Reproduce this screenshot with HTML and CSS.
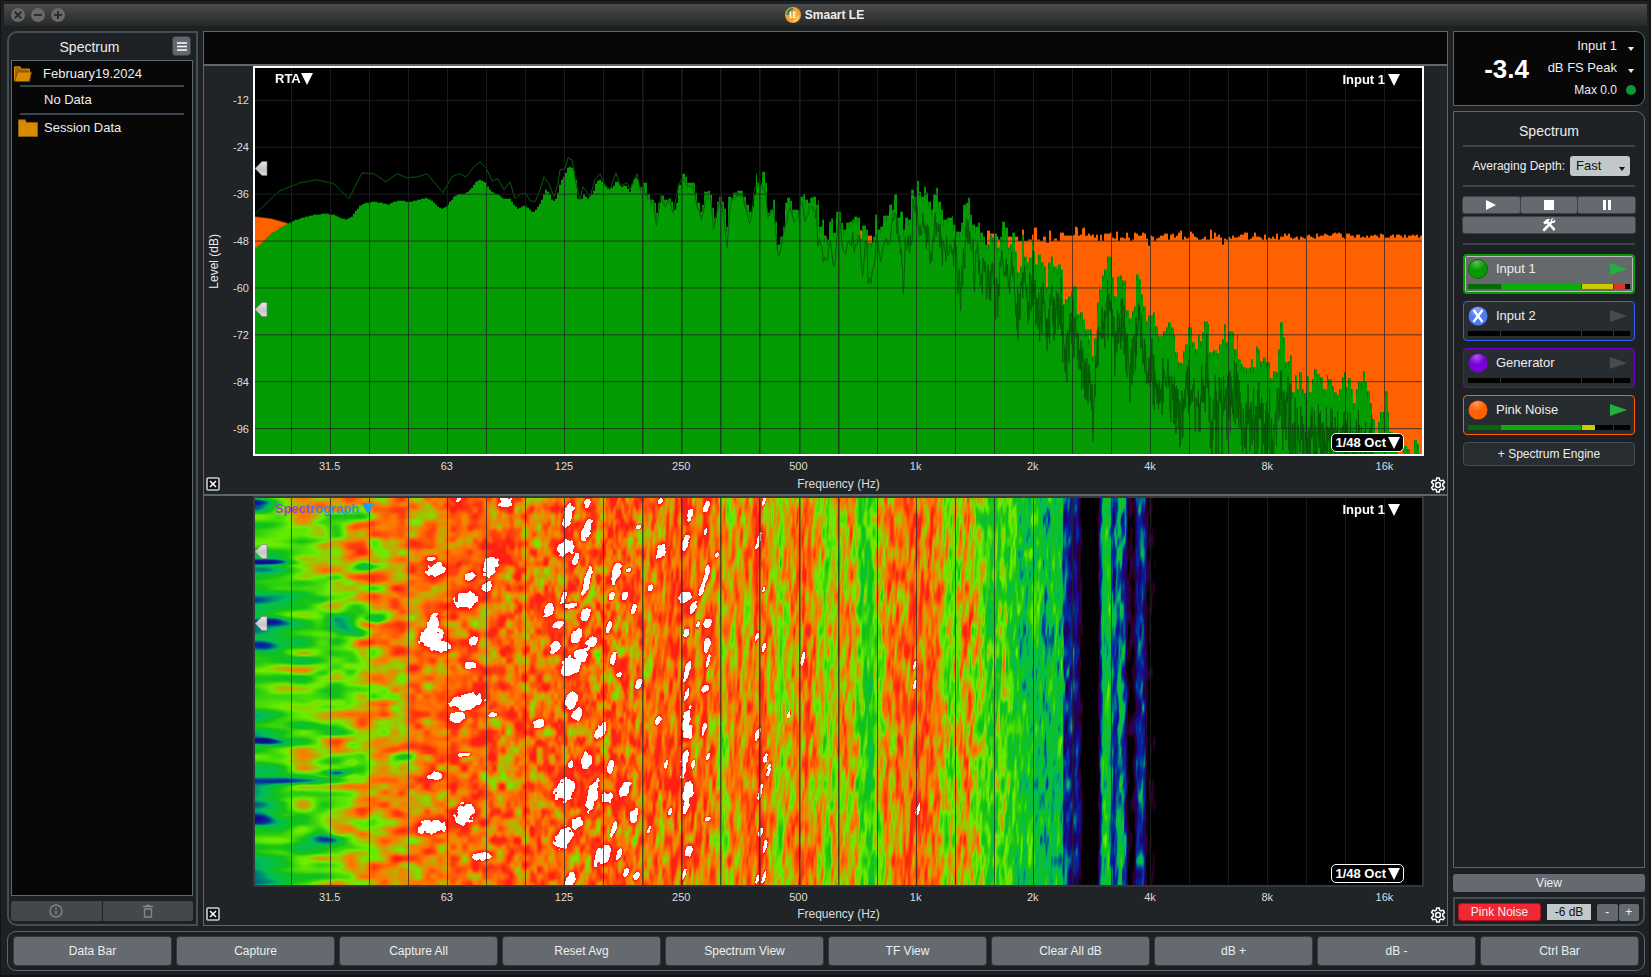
FILE: index.html
```html
<!DOCTYPE html>
<html lang="en">
<head>
<meta charset="utf-8">
<title>Smaart LE</title>
<link rel="stylesheet" href="styles.css">
</head>
<body>
<svg class="defs" width="0" height="0" aria-hidden="true">
  <defs>
    <radialGradient id="shine" cx=".42" cy=".15" r=".45"><stop offset="0" stop-color="#fff" stop-opacity=".35"/><stop offset="1" stop-color="#fff" stop-opacity="0"/></radialGradient>
    <linearGradient id="blue" x1="0" x2="1"><stop offset="0" stop-color="#2f8fe0"/><stop offset="1" stop-color="#00b0ff"/></linearGradient>
    <linearGradient id="knob" x1="0" x2="0" y1="0" y2="1"><stop offset="0" stop-color="#e8e8e8"/><stop offset=".55" stop-color="#c6c6c6"/><stop offset="1" stop-color="#e0e0e0"/></linearGradient>
    <symbol id="tri" viewBox="0 0 12 12"><path d="M0 0h12L6 12z" fill="currentColor"/></symbol>
    <symbol id="caret" viewBox="0 0 6 4"><path d="M0 0h6L3 4z" fill="currentColor"/></symbol>
    <symbol id="handle" viewBox="0 0 13 15"><path d="M0 7.500L7 .5h5v14H7z" fill="url(#knob)" stroke="#777" stroke-width=".6"/></symbol>
    <symbol id="gear" viewBox="0 0 24 24"><path d="M10 1.500h4l.6 3.300 2 1.100 3.100-1.200 2 3.500-2.500 2.100v3.400l2.500 2.100-2 3.500-3.100-1.200-2 1.100-.6 3.300h-4l-.6-3.300-2-1.100-3.100 1.200-2-3.500 2.500-2.100v-3.400L2.300 8.200l2-3.500 3.100 1.200 2-1.100z" fill="none" stroke="currentColor" stroke-width="2.200" stroke-linejoin="round"/><circle cx="12" cy="12" r="3.700" fill="none" stroke="currentColor" stroke-width="2.200"/></symbol>
    <symbol id="xbox" viewBox="0 0 14 14"><rect x="1" y="1" width="12" height="12" rx="1" fill="#111" stroke="#ccc" stroke-width="1.600"/><path d="M4 4l6 6M10 4l-6 6" stroke="#fff" stroke-width="1.600"/></symbol>
  </defs>
</svg>
<div class="window">
  <header class="titlebar">
    <div class="lights">
      <button class="light" aria-label="Close"><svg viewBox="0 0 14 14"><circle cx="7" cy="7" r="7"/><path d="M3.800 3.800l6.400 6.400M10.200 3.800l-6.400 6.400"/></svg></button>
      <button class="light" aria-label="Minimize"><svg viewBox="0 0 14 14"><circle cx="7" cy="7" r="7"/><path d="M3 7h8"/></svg></button>
      <button class="light" aria-label="Zoom"><svg viewBox="0 0 14 14"><circle cx="7" cy="7" r="7"/><path d="M3 7h8M7 3v8"/></svg></button>
    </div>
    <div class="title">
      <svg class="logo" viewBox="0 0 16 16"><circle cx="8" cy="8" r="8" fill="#eda52b"/><path d="M2.500 8A5.500 5.500 0 0 1 8 2" fill="none" stroke="#14806a" stroke-width="2"/><path d="M13.500 8.500A5.500 5.500 0 0 1 8 14" fill="none" stroke="#f8cf7e" stroke-width="1.600"/><path d="M5.500 5v5.500h2M11 5.300H8.700v5H11M8.700 7.800h2" fill="none" stroke="#fff" stroke-width="1.200"/></svg>
      <h1>Smaart LE</h1>
    </div>
  </header>

  <main class="main">
    <aside class="databar">
      <div class="databar-head"><h2>Spectrum</h2><button class="menu" aria-label="Data menu"><svg viewBox="0 0 10 9"><path d="M0 1h10M0 4.500h10M0 8h10"/></svg></button></div>
      <ul class="tree">
        <li class="open"><svg class="folder" viewBox="0 0 18 16"><path d="M.5 15V.8h5.500l1.200 2.200h8.300v3" fill="#a86500" stroke="#d98b00"/><path d="M3.500 6h14l-2 9.500H.8z" fill="#d98b00" stroke="#6e4500" stroke-width=".8"/></svg>February19.2024</li>
        <li class="leaf">No Data</li>
        <li><svg class="folder big" viewBox="0 0 20 18"><path d="M.5 17.500V.8h6.800l1 2.600h11.200v14.100z" fill="#d98b00" stroke="#96600a" stroke-width=".8"/></svg>Session Data</li>
      </ul>
      <div class="pair">
        <button aria-label="Info"><svg viewBox="0 0 14 14"><circle cx="7" cy="7" r="6"/><path d="M7 6.200v4M7 3.600v1.300"/></svg></button>
        <button aria-label="Delete"><svg viewBox="0 0 14 14"><path d="M2 2.500h10M5 1.300h4M3.500 5v8h7V5z"/></svg></button>
      </div>
    </aside>

    <section class="graphs">
      <div class="strip"></div>
      <div class="pane rta">
        <div class="yname"><span>Level (dB)</span></div>
        <div class="yticks"><span>-12</span><span>-24</span><span>-36</span><span>-48</span><span>-60</span><span>-72</span><span>-84</span><span>-96</span></div>
        <div class="plot active">
          <canvas id="rta" width="1167" height="387"></canvas>
          <button class="tag type">RTA<svg><use href="#tri"/></svg></button>
          <button class="tag source">Input 1<svg><use href="#tri"/></svg></button>
          <button class="tag band">1/48 Oct<svg><use href="#tri"/></svg></button>
          <svg class="handle h1"><use href="#handle"/></svg>
          <svg class="handle h2"><use href="#handle"/></svg>
        </div>
        <div class="xticks"><span>31.5</span><span>63</span><span>125</span><span>250</span><span>500</span><span>1k</span><span>2k</span><span>4k</span><span>8k</span><span>16k</span></div>
        <button class="corner x" aria-label="Hide plot"><svg><use href="#xbox"/></svg></button>
        <div class="xname">Frequency (Hz)</div>
        <button class="corner g" aria-label="Plot settings"><svg><use href="#gear"/></svg></button>
      </div>
      <div class="pane sgram">
        <div class="plot">
          <canvas id="sgram" width="1167" height="387"></canvas>
          <button class="tag type rainbow"><span>Spectrograph</span><svg viewBox="0 0 12 12"><path d="M0 0h12L6 12z" fill="url(#blue)"/></svg></button>
          <button class="tag source">Input 1<svg><use href="#tri"/></svg></button>
          <button class="tag band">1/48 Oct<svg><use href="#tri"/></svg></button>
          <svg class="handle h3"><use href="#handle"/></svg>
          <svg class="handle h4"><use href="#handle"/></svg>
        </div>
        <div class="xticks"><span>31.5</span><span>63</span><span>125</span><span>250</span><span>500</span><span>1k</span><span>2k</span><span>4k</span><span>8k</span><span>16k</span></div>
        <button class="corner x" aria-label="Hide plot"><svg><use href="#xbox"/></svg></button>
        <div class="xname">Frequency (Hz)</div>
        <button class="corner g" aria-label="Plot settings"><svg><use href="#gear"/></svg></button>
      </div>
    </section>

    <aside class="controls">
      <div class="meter">
        <strong>-3.4</strong>
        <div class="meter-rows">
          <label><select aria-label="Meter input"><option>Input 1</option></select><svg class="caret"><use href="#caret"/></svg></label>
          <label><select aria-label="Meter type"><option>dB FS Peak</option></select><svg class="caret"><use href="#caret"/></svg></label>
          <div class="max"><span>Max 0.0</span><i></i></div>
        </div>
      </div>
      <div class="spectrum">
        <h2>Spectrum</h2>
        <div class="depth"><label for="depth">Averaging Depth:</label><div class="selectbox"><select id="depth"><option>Fast</option></select><svg class="caret"><use href="#caret"/></svg></div></div>
        <div class="transport">
          <button aria-label="Run"><svg viewBox="0 0 10 10"><path d="M0 0l10 5-10 5z"/></svg></button>
          <button aria-label="Stop"><svg viewBox="0 0 10 10"><path d="M0 0h10v10H0z"/></svg></button>
          <button aria-label="Pause"><svg viewBox="0 0 10 10"><path d="M1 0h3v10H1zM6 0h3v10H6z"/></svg></button>
          <button class="tools" aria-label="Measurement config"><svg viewBox="0 0 14 14"><path d="M1 4.500L5 1h3L6.500 3.500 13.500 11l-1.600 2L5 5.500 3 6.500z"/><path d="M13 1.500l-2 1.800-.8-.2-.2-1L12 .3c-2-.6-3.600.8-3.200 2.700L1 11c-.8 1.200 1 2.800 2 2l7.500-8c2 .5 3.200-1.200 2.500-3.500z"/></svg></button>
        </div>
        <div class="engines">
          <div class="engine green selected">
            <svg class="ball" viewBox="0 0 20 20"><circle cx="10" cy="10" r="9.500" fill="#079a00" stroke="#0a6a08"/><circle cx="10" cy="10" r="9" fill="url(#shine)"/></svg><span>Input 1</span><button class="go on" aria-label="Run Input 1"><svg viewBox="0 0 17 12"><path d="M0 0l17 6-17 6z"/></svg></button>
            <div class="level"><i><b class="c1" style="width:100%"></b></i><i><b class="c2" style="width:100%"></b></i><i><b class="c3" style="width:100%"></b></i><i><b class="c4" style="width:70%"></b></i></div>
          </div>
          <div class="engine blue">
            <svg class="ball" viewBox="0 0 20 20"><circle cx="10" cy="10" r="9.500" fill="#5079f5"/><circle cx="10" cy="10" r="9" fill="url(#shine)"/><path d="M5.500 4l9 12M14.500 4l-9 12" stroke="#fff" stroke-width="2.400"/></svg><span>Input 2</span><button class="go" aria-label="Run Input 2"><svg viewBox="0 0 17 12"><path d="M0 0l17 6-17 6z"/></svg></button>
            <div class="level"><i></i><i></i><i></i><i></i></div>
          </div>
          <div class="engine purple">
            <svg class="ball" viewBox="0 0 20 20"><circle cx="10" cy="10" r="9.500" fill="#7800d8"/><circle cx="10" cy="10" r="9" fill="url(#shine)"/></svg><span>Generator</span><button class="go" aria-label="Run Generator"><svg viewBox="0 0 17 12"><path d="M0 0l17 6-17 6z"/></svg></button>
            <div class="level"><i></i><i></i><i></i><i></i></div>
          </div>
          <div class="engine orange">
            <svg class="ball" viewBox="0 0 20 20"><circle cx="10" cy="10" r="9.500" fill="#ff6000"/><circle cx="10" cy="10" r="9" fill="url(#shine)"/></svg><span>Pink Noise</span><button class="go on" aria-label="Run Pink Noise"><svg viewBox="0 0 17 12"><path d="M0 0l17 6-17 6z"/></svg></button>
            <div class="level"><i><b class="c1" style="width:100%"></b></i><i><b class="c2" style="width:100%"></b></i><i><b class="c3" style="width:42%"></b></i><i></i></div>
          </div>
          <button class="add">+ Spectrum Engine</button>
        </div>
      </div>
      <button class="view">View</button>
      <div class="generator">
        <button class="noise">Pink Noise</button>
        <input type="text" value="-6 dB" aria-label="Generator level">
        <div class="steps"><button>-</button><button>+</button></div>
      </div>
    </aside>
  </main>

  <nav class="commands">
    <button>Data Bar</button><button>Capture</button><button>Capture All</button><button>Reset Avg</button><button>Spectrum View</button><button>TF View</button><button>Clear All dB</button><button>dB +</button><button>dB -</button><button>Ctrl Bar</button>
  </nav>
</div>
<script src="plots.js"></script>
</body>
</html>
```

FILE: styles.css
```css
* { box-sizing: border-box; }
body, h1, h2, ul { margin: 0; padding: 0; }
body { background: #1d2124; color: #eee; font: 12px/16px "Liberation Sans", Arial, sans-serif; }
button, select, input { font: inherit; color: inherit; margin: 0; padding: 0; border: 0; background: none; }
select { appearance: none; }
svg { display: block; }
.defs { position: absolute; }

.window { height: 100vh; display: flex; flex-direction: column; border: 1px solid #111416; border-width: 1px 2px 2px 1px; padding: 3px 4px 3px 6px; }
.titlebar { flex: none; height: 22px; margin: 0 -2px 5px -3px; padding: 0 9px 0 7px; display: grid; grid-template-columns: 1fr auto 1fr; align-items: center; background: linear-gradient(#4c4c4c, #272828); }
.lights { display: flex; gap: 6px; }
.light svg { width: 14px; height: 14px; fill: #696969; stroke: #2c2c2c; stroke-width: 2; }
.light circle { stroke: none; }
.title { display: flex; align-items: center; gap: 4px; }
.logo { width: 16px; height: 16px; }
h1 { font-size: 12px; line-height: 16px; }
h2 { font-size: 14px; line-height: 16px; font-weight: 400; text-align: center; }

.main { flex: 1; min-height: 0; display: grid; grid-template-columns: 191px 1fr 192px; gap: 5px; }

.databar { display: flex; flex-direction: column; border: 2px solid #454e54; border-radius: 10px 0 0 10px; padding: 4px 3px 3px 2px; min-height: 0; }
.databar-head { position: relative; height: 23px; padding: 2px 25px 0 0; }
.menu { position: absolute; right: 3px; top: 0; width: 17px; height: 18px; border-radius: 3px; background: #63686e; box-shadow: 0 0 0 1px #3a4248; }
.menu svg { width: 10px; height: 9px; margin: 0 auto; stroke: #fff; stroke-width: 1.500; }
.tree { flex: 1; list-style: none; background: #070707; border: 1px solid #5b676e; padding: 0 8px; font-size: 13px; }
.tree li { display: flex; align-items: center; gap: 2px; height: 27px; }
.tree li + li { border-top: 2px solid #3a4350; }
.tree .leaf { padding-left: 24px; height: 28px; }
.tree .open { margin-left: -6px; gap: 11px; height: 24px; padding-top: 2px; }
.folder { width: 18px; height: 16px; }
.folder.big { width: 20px; height: 18px; margin-left: -2px; margin-right: 4px; }
.pair { display: grid; grid-template-columns: 1fr 1fr; gap: 1px; margin-top: 5px; }
.pair button { height: 20px; background: #43484c; border-radius: 3px 0 0 3px; }
.pair button + button { border-radius: 0 3px 3px 0; }
.pair svg { width: 14px; height: 14px; margin: 0 auto; fill: none; stroke: #82878a; stroke-width: 1.300; }

.graphs { display: flex; flex-direction: column; min-width: 0; min-height: 0; border: 1px solid #5b666d; background: #202427; }
.strip { flex: none; height: 34px; background: #070707; border-bottom: 2px solid #5b666d; }
.pane { position: relative; flex: 1 1 0; min-height: 0; padding-bottom: 2px; display: grid; grid-template: minmax(0, 1fr) 20px 16px / 28px 21px minmax(0, 1fr) 23px; }
.pane.rta { flex-basis: 3px; padding-bottom: 1px; grid-template-rows: minmax(0, 1fr) 21px 16px; border-bottom: 2px solid #5b666d; }
.xticks { grid-area: 2 / 1 / 3 / 5; display: grid; grid-template-columns: repeat(10, 1fr); margin: 2px 4px 0 67px; text-align: center; font-size: 11px; }
.xname { grid-area: 3 / 3; text-align: center; line-height: 14px; }
.yname { grid-area: 1 / 1; display: grid; place-items: center; writing-mode: vertical-rl; }
.yname span { transform: rotate(180deg); margin-right: 8px; }
.yticks { grid-area: 1 / 1 / 2 / 3; display: grid; grid-template-rows: repeat(8, 1fr); align-items: center; text-align: right; font-size: 11px; padding: 11px 4px 4px 0; }
.xticks, .yticks, .xname { color: #ddd; }
.plot { grid-area: 1 / 3; position: relative; min-width: 0; min-height: 0; border: 2px solid #35383a; background: #000; }
.plot.active { border-color: #fff; }
.plot canvas { display: block; width: 100%; height: 100%; }
.corner { grid-row: 3; align-self: start; }
.corner.x { grid-column: 1; }
.corner.g { grid-column: 4; }
.corner svg { width: 14px; height: 14px; margin-left: 2px; }
.corner.g svg { width: 16px; height: 16px; margin-left: 6px; color: #fff; }
.tag { position: absolute; display: flex; align-items: center; gap: 1px; font-size: 13px; line-height: 16px; font-weight: 700; color: #fff; }
.tag svg { width: 12px; height: 12px; }
.type { left: 20px; top: 3px; gap: 0; }
.source { right: 22px; top: 4px; gap: 3px; }
.band { right: 18px; bottom: 2px; height: 19px; gap: 2px; padding: 0 3px; background: #000; border: 1px solid #fff; border-radius: 5px; }
.rainbow { gap: 2px; }
.rainbow span { background: linear-gradient(90deg, #c030e0, #7848e0 20%, #2b8be0 55%, #2f8fe0); background-clip: text; -webkit-background-clip: text; color: transparent; }
.handle { position: absolute; left: 0; width: 13px; height: 15px; }
.h1 { top: 24%; } .h2 { top: 60.5%; } .h3 { top: 12%; } .h4 { top: 30.5%; }

.controls { display: flex; flex-direction: column; min-height: 0; }
.meter { display: flex; align-items: center; justify-content: flex-end; gap: 10px; height: 75px; padding: 0 8px 2px 0; background: #070707; border: 1px solid #5b676e; border-radius: 0 9px 9px 0; }
.meter strong { font-size: 26px; line-height: 30px; padding-top: 2px; color: #fff; }
.meter-rows { display: grid; gap: 6px; font-size: 13px; }
.meter label, .max { display: grid; grid-template-columns: 78px 10px; gap: 9px; align-items: center; height: 16px; }
.meter select { width: 78px; text-align: right; text-align-last: right; }
.meter .caret { margin: 6px 2px 0; }
.caret { width: 6px; height: 4px; }
.max { text-align: right; font-size: 12px; }
.max i { width: 10px; height: 10px; border-radius: 50%; background: #079a38; }

.spectrum { flex: 1; min-height: 0; margin-top: 5px; padding: 11px 9px; border: 1px solid #5b676e; border-radius: 0 9px 0 0; }
.spectrum h2 { height: 24px; border-bottom: 2px solid #3c444a; }
.depth { display: flex; align-items: center; justify-content: flex-end; gap: 5px; height: 40px; padding-right: 5px; border-bottom: 2px solid #3c444a; }
.selectbox { position: relative; color: #111; }
.selectbox select { width: 60px; height: 20px; padding-left: 6px; border-radius: 3px; background: #c2c8c9; font-size: 13px; }
.selectbox .caret { position: absolute; right: 5px; bottom: 5px; }
.transport { display: grid; grid-template-columns: repeat(3, 1fr); gap: 4px 1px; padding: 10px 0; border-bottom: 2px solid #3c444a; }
.transport button { height: 16px; background: #646a6f; border-radius: 2px; box-shadow: 0 0 0 1px #3a4248; }
.transport .tools { grid-column: 1 / 4; }
.transport svg { width: 10px; height: 10px; margin: 0 auto; fill: #fff; }
.transport .tools svg { width: 14px; height: 14px; }
.engines { display: grid; gap: 7px; padding-top: 9px; }
.engine { position: relative; height: 40px; padding: 4px 7px 0 4px; display: grid; grid-template: 20px 5px / 20px 1fr 17px; column-gap: 8px; row-gap: 5px; align-items: center; background: #272c30; border: 1px solid; border-radius: 4px; font-size: 13px; }
.engine.green { border: 2px solid #079a00; padding: 3px 6px 0 3px; }
.engine.selected { background: #66696c; box-shadow: inset 0 0 0 1px #bbb; }
.engine.blue { border-color: #3460f0; }
.engine.purple { border-color: #7200cc; }
.engine.orange { border-color: #ff6000; }
.engine span { color: #eee; }
.ball { width: 20px; height: 20px; }
.go svg { width: 17px; height: 12px; fill: #4a4a4a; }
.go.on svg { fill: #24b040; }
.level { grid-column: 1 / 4; margin-right: -3px; height: 5px; display: grid; grid-template-columns: 32fr 80fr 31fr 16fr; gap: 1px; background: #33383b; }
.level i { background: #000; }
.level b { display: block; height: 5px; }
.c1 { background: #056a05; } .c2 { background: #06b006; } .c3 { background: #cccb00; } .c4 { background: #d83232; }
.add { height: 24px; border: 1px solid #454e54; border-radius: 4px; background: #282d31; }
.view { flex: none; height: 18px; margin-top: 6px; background: #646a6f; border-radius: 3px; }
.generator { flex: none; height: 29px; margin-top: 5px; display: flex; align-items: center; gap: 6px; padding: 1px 4px 0 3px; border: 2px solid #454e54; border-radius: 0 0 9px 0; }
.noise { width: 83px; height: 18px; border-radius: 3px; background: #ee2835; border: 1px solid #b5101c; line-height: 14px; }
.generator input { width: 44px; height: 16px; background: #c2c8c9; color: #111; text-align: center; min-width: 0; }
.steps { display: grid; grid-template-columns: 1fr 1fr; gap: 1px; flex: 1; }
.steps button { height: 17px; background: #646a6f; border-radius: 2px; line-height: 14px; }

.commands { flex: none; margin-top: 5px; margin-bottom: 1px; height: 40px; display: grid; grid-template-columns: repeat(10, 1fr); gap: 6px; align-items: center; padding: 0 6px; border: 1px solid #5b676e; border-radius: 9px; }
.commands button { height: 28px; background: #646a6f; border-radius: 3px; box-shadow: 0 0 0 1px #33393e; }
```

FILE: plots.js
```js
// Deterministic pseudo random source so the plots are stable between loads.
function rng(seed) {
  return function () {
    seed = (seed + 0x6D2B79F5) | 0;
    var t = Math.imul(seed ^ (seed >>> 15), 1 | seed);
    t = (t + Math.imul(t ^ (t >>> 7), 61 | t)) ^ t;
    return ((t ^ (t >>> 14)) >>> 0) / 4294967296;
  };
}
// "x:y x:y" series to points, scaled and shifted into plot space.
function series(text, dx, dy, k) {
  return text.trim().split(/\s+/).map(function (p) {
    var a = p.split(':');
    return [+a[0] * k + dx, +a[1] * k + dy];
  });
}
function lerpAt(pts, x) {
  if (x <= pts[0][0]) return pts[0][1];
  for (var i = 1; i < pts.length; i++) {
    if (x <= pts[i][0]) {
      var a = pts[i - 1], b = pts[i];
      return a[1] + (b[1] - a[1]) * (x - a[0]) / (b[0] - a[0] || 1);
    }
  }
  return pts[pts.length - 1][1];
}
function grid(ctx, w, h, rows) {
  for (var k = 0; k < 29; k++) {
    ctx.fillStyle = 'rgba(34,36,40,.72)';
    ctx.fillRect(Math.round(36 + 39.04 * k), 0, 1, h);
    if (k > 8 && k < 15) {
      ctx.fillStyle = 'rgba(34,36,40,.4)';
      ctx.fillRect(Math.round(36 + 39.04 * k) + 1, 0, 1, h);
    }
  }
  if (rows) {
    ctx.fillStyle = 'rgba(34,36,40,.8)';
    for (var r = 0; r < 8; r++) ctx.fillRect(0, 32 + 47 * r, w, 1);
  }
}

(function drawRta() {
  var c = document.getElementById('rta'), ctx = c.getContext('2d'), w = c.width, h = c.height, rand = rng(7);
  var T = 1 / 3;
  var low = series('255:248 262:242 270:234 278:229 287:224 296:220 305:217 315:215 325:214 333:215 339:218 345:220 350:218 355:211 360:205 366:203 372:202 380:203 387:205 393:202 400:201 410:202 417:200 425:198 430:200 436:206 442:209 447:205 453:197 460:194 466:193 470:189 475:182 480:180 485:183 490:192 497:195 503:199 509:199 513:205 517:209 524:206 528:209 532:213 536:209 540:202 543:195 545:190 548:193 551:200 554:202 557:193 560:181 564:176 567:168 570:166 573:171 576:184 577:199 580:201 583:195 587:199 592:194 596:181 600:180 604:186 608:190 613:186 616:180 620:187 625:186 629:192 632:181 636:177 639:186', -255, -68, 1);
  var mid = series('0:140 10:130 20:165 30:180 42:190 48:220 55:190 63:168 73:180 83:178 92:185 100:210 108:190 113:135 122:135 127:102 135:110 140:128 160:130 165:160 170:190 180:215 187:195 193:155 203:152 210:165 217:205 222:235 230:185 238:172 245:185 252:208 258:260 265:170 272:175 280:160 290:152 305:152 310:170 318:195 328:215 335:200 342:165 347:102 352:130 360:135 367:95 375:130 381:220 390:210 398:180 405:245 412:315 420:290 428:260 435:190 442:175 450:182 457:210 475:212 480:170 488:162 495:180 505:190 510:175 520:172 527:195 533:180 537:260 545:240 552:290 560:300 567:245 573:238 580:280 588:215 600:215 602:250 610:270 618:250 626:245 635:240 642:230 652:235 660:296 666:258 677:270 683:310 692:310 700:290 706:225 712:270 720:260 728:228 738:228 748:195 755:210 763:165 770:235 780:215 788:270 795:235 805:240 813:150 822:170 830:123 836:155 843:170 852:140 858:160 865:185 872:210 880:165 888:145 895:185 903:210 910:240 920:235 935:228 940:255 948:275 956:275 962:250 968:195 978:190 985:175 990:225 997:255 1005:262 1013:250 1020:280 1030:290 1035:315 1043:315 1050:285 1057:295 1063:282 1072:325 1080:290 1087:245 1095:265 1103:325 1110:315 1116:278 1125:335 1130:398 1140:380 1146:285 1153:350 1160:370 1168:355 1175:300 1180:335 1186:375 1195:345 1203:370 1212:380 1218:445 1224:370 1232:352 1240:380 1250:390 1255:375 1262:390 1268:495 1275:480 1285:470 1293:455 1298:445 1306:455 1312:525 1320:520 1328:540 1335:575 1342:600 1348:570', 385, 72, T);
  var high = series('0:210 8:315 15:300 25:290 32:275 38:262 50:345 60:340 67:360 75:395 83:420 90:390 96:470 103:418 110:308 118:270 125:228 133:210 140:170 152:175 155:235 162:290 170:232 180:228 185:243 195:243 198:332 208:358 215:335 222:322 228:226 236:240 243:285 250:320 258:365 265:348 278:338 285:380 295:410 308:397 317:385 325:370 333:385 343:408 345:460 353:490 362:493 368:455 376:435 384:383 393:385 396:430 405:450 413:408 420:425 425:400 433:367 443:375 447:460 460:452 470:463 478:435 486:420 491:375 497:430 505:397 518:400 521:450 530:405 535:480 543:495 550:503 558:507 570:505 572:480 580:505 587:440 595:450 600:485 610:475 618:488 628:490 630:537 640:515 648:520 653:450 660:370 668:415 675:490 683:487 690:468 696:580 704:528 712:570 718:520 725:570 732:582 740:532 748:580 755:540 763:510 770:525 780:535 790:570 800:528 805:540 815:560 822:580 832:587 838:570 845:535 852:520 858:565 865:537 872:570 880:612 887:570 893:550 903:550 910:517 915:550 922:575 930:612 937:660 945:705 953:670 960:640 970:640 975:577 983:640 988:700 1000:730 1015:770 1030:740 1040:750 1050:765 1062:722 1070:735 1077:775 1090:775', 805, 132, T);
  var bars = mid.concat(high);

  // Pink noise trace (behind the main trace)
  ctx.fillStyle = '#ff6000';
  ctx.beginPath();
  ctx.moveTo(0, h); ctx.lineTo(0, 149); ctx.lineTo(16, 151); ctx.lineTo(34, 156); ctx.lineTo(34, h); ctx.fill();
  [[552, 288, 6], [660, 272, 6], [683, 288, 13]].forEach(function (b) { ctx.fillRect(385 + b[0] * T, 72 + b[1] * T, b[2] * T, 60); });
  var pk = series('1042:272 1050:283 1065:290 1075:300 1085:290 1100:290 1115:285 1125:290 1135:303 1146:270 1152:303 1165:300 1175:285 1183:265 1190:300 1200:303 1210:290 1218:310 1226:273 1232:303 1242:298 1250:303 1262:290 1280:292 1284:315 1292:290 1297:303 1306:262 1312:303 1320:293 1328:265 1335:290 1348:288', 385, 72, T);
  pk.forEach(function (p, i) {
    var n = i + 1 < pk.length ? pk[i + 1][0] : 806;
    ctx.fillRect(Math.round(p[0]), Math.round(p[1]), Math.round(n) - Math.round(p[0]), h);
  });
  var spikes = [[24, 134], [46, 84], [68, 88], [150, 98], [170, 96], [200, 98], [265, 138], [361, 94], [391, 97], [449, 90], [486, 135]];
  for (var q = 0; q < 1090; q += 6) {
    var y = 112 - q / 250 + (rand() - 0.5) * 28 * (1 - q / 2400), sp = null;
    spikes.forEach(function (s) { if (Math.abs(s[0] - q) < 3) sp = s[1]; });
    ctx.fillRect(805 + q / 3, Math.round(132 + (sp || y) * T), 2, h);
  }

  // Main trace fill
  ctx.fillStyle = '#039c03';
  for (var x = 0; x < 385; x += 1) {
    ctx.fillRect(x, Math.round(lerpAt(low, x - x % 2)), 1, h);
  }
  for (var i = 0; i < bars.length - 1; i++) {
    var x0 = Math.round(bars[i][0]), x1 = Math.round(bars[i + 1][0]);
    ctx.fillRect(x0, Math.round(bars[i][1]), x1 - x0, h);
    ctx.fillStyle = 'rgba(0,70,0,.35)';
    ctx.fillRect(x0, Math.round(bars[i][1]), 1, 6);
    ctx.fillStyle = '#039c03';
  }

  // Narrow-band line
  var l1 = series('255:214 280:191 300:183 317:180 334:184 349:199 362:173 374:174 386:182 397:174 407:178 418:177 427:174 443:193 452:177 459:174 466:177 473:168 480:162 486:168 492:181 498:179 504:190 510:182 515:199 521:194 526:194 530:201 535:202 540:190 544:177 549:184 554:197 558:184 560:170 565:169 568:158 572:160 576:184 580:200 583:187 590:197 595:180 600:174 604:184 610:190 616:173 620:186 627:183 630:190 637:174', -255, -68, 1);
  var l2 = series('0:145 10:140 20:168 40:190 50:258 63:172 75:200 85:180 100:215 113:145 125:112 140:135 160:140 170:195 185:240 200:165 213:180 220:275 238:180 250:210 260:333 272:180 295:165 310:175 330:260 345:140 360:130 375:150 385:240 400:200 415:360 440:240 450:200 465:260 485:180 495:245 515:195 530:250 545:340 562:370 575:300 582:360 597:240 612:345 625:310 640:300 660:300 663:385 678:310 688:455 700:380 710:310 720:350 735:280 745:290 765:210 780:330 790:430 797:290 808:350 820:215 832:240 845:230 860:290 870:340 885:230 895:250 910:320 925:340 940:330 950:380 963:470 970:340 985:250 1005:390 1015:340 1035:420 1050:400 1070:470 1090:340 1110:480 1115:370 1135:520 1150:400 1165:500 1180:400 1195:520 1210:480 1220:600 1230:480 1245:520 1262:480 1275:640 1300:550 1315:620 1335:680 1345:760', 385, 72, T);
  var l3 = series('0:340 10:400 25:450 40:380 60:480 80:540 100:640 115:430 130:380 148:300 165:430 180:350 195:400 210:530 235:380 250:450 265:540 275:490 295:580 325:530 345:610 360:670 385:560 405:640 440:520 455:680 485:620 500:590 530:600 545:680 590:640 620:660 640:740 663:580 690:660 710:735 740:730 780:730 850:735 910:740 940:790 1090:850', 805, 132, T);
  ctx.strokeStyle = '#0a5f0a';
  ctx.lineWidth = 1;
  ctx.beginPath();
  l1.forEach(function (p, n) { n ? ctx.lineTo(p[0], p[1]) : ctx.moveTo(p[0], p[1]); });
  var line = l2.concat(l3);
  for (x = 385; x < 560; x += 1.5) ctx.lineTo(x, lerpAt(line, x) + (rand() - 0.5) * 4);
  ctx.stroke();
  ctx.strokeStyle = '#045c04';
  ctx.beginPath();
  for (x = 560; x < 1120; x += x < 640 ? 1.4 : x < 760 ? 0.7 : 0.4) {
    var amp = x < 640 ? 15 : x < 700 ? 20 : x < 760 ? 26 : x < 950 ? 33 : 46;
    var n = rand() + rand() - 1;
    var ly = lerpAt(line, x) + n * amp * (n > 0 ? 1.3 : 1);
    x === 560 ? ctx.moveTo(x, ly) : ctx.lineTo(x, ly);
  }
  ctx.stroke();
  grid(ctx, w, h, true);
})();

(function drawSpectrograph() {
  var c = document.getElementById('sgram'), ctx = c.getContext('2d'), w = c.width, h = c.height, T = 1 / 3;
  var rand = rng(21), N = 512, lattice = new Float32Array(N * N);
  for (var i = 0; i < lattice.length; i++) lattice[i] = rand() * 2 - 1;
  function smooth(t) { return t * t * (3 - 2 * t); }
  function noise(u, v) {
    var a = Math.floor(u), b = Math.floor(v), fu = smooth(u - a), fv = smooth(v - b);
    var a0 = a & 511, a1 = (a + 1) & 511, b0 = (b & 511) * N, b1 = ((b + 1) & 511) * N;
    var t = lattice[b0 + a0] * (1 - fu) + lattice[b0 + a1] * fu;
    var s = lattice[b1 + a0] * (1 - fu) + lattice[b1 + a1] * fu;
    return t * (1 - fv) + s * fv;
  }
  var profile = series('0:4.7 40:5.5 80:6.1 110:6.5 140:6.9 180:7.1 230:7.2 300:7.15 378:7.15', 0, 0, 1).concat(
    series('115:7 245:7.3 320:7.2 370:6.4 400:6.9 440:7 480:7.4 510:6.7 540:6.1 580:6.9 620:7.1 650:6.6 680:5.9 720:6.7 760:6.7 780:5.6 810:5.1 830:6.1 870:6.9 950:7.4 1000:7.1 1030:6.4', 0, 0, 1).map(function (p) { return [345 + p[0] * T, p[1]]; }),
    series('-30:6 -10:6 10:6.1 30:6.3 45:7 60:6.7 75:6.2 95:5.8 120:5.1 160:5.8 190:5 210:4.6 250:4.9 285:4.2 300:4.5 335:4.6 340:2.8 360:2.6 380:2.4 390:1.2 400:-1 440:-1 448:2.4 458:4.5 475:4.8 490:3 510:4 525:3 535:.2 550:.4 558:2.5 575:3 585:1.800 592:0 602:.2 612:-.3 620:-2 1500:-3', 0, 0, 1).map(function (p) { return [695 + p[0] * T, p[1]]; }));
  function list(text, ox) {
    return text.trim().split(/\s+/).map(function (s) {
      var a = s.split(',').map(Number);
      return [(a[0] + ox) * T, (a[1] - 27) * T, a[2] * T, a[3] * T];
    });
  }
  var hot = list('915,40,18,16 1103,80,13,38 1160,120,14,30 1093,175,27,22 695,208,12,7 705,242,25,20 868,230,20,30 810,262,15,13 860,292,14,16 797,332,32,26 697,405,15,28 692,445,32,25 720,472,28,16 1045,362,14,20 1072,405,15,12 1090,325,8,18 1112,348,18,8 1155,375,13,18 1065,472,14,18 1127,440,15,20 1112,530,26,30 1142,497,20,22 1172,458,14,18 820,452,12,14 810,527,16,10 800,635,44,24 770,685,22,16 878,675,12,7 1015,703,15,12 1112,635,16,25 1130,675,14,18 790,795,16,6 705,860,22,12 1110,825,8,12 1157,815,15,28 1095,900,30,32 1175,920,15,45 792,973,27,30 695,1012,42,19 1130,1000,15,18 1090,1045,25,30 845,1100,24,13 1110,1170,14,20 1125,212,8,20 1160,275,9,40 1192,730,8,20 1192,1100,8,30 775,30,6,8 1160,40,9,14', -165)
    .concat(list('180,35,8,10 318,50,8,18 268,75,8,18 315,128,5,12 115,112,8,6 255,160,9,28 182,185,13,22 48,250,13,28 85,242,8,6 33,320,8,12 73,318,10,15 100,357,8,14 150,297,7,10 255,322,18,20 278,355,9,20 318,255,7,28 303,300,7,20 322,402,12,14 25,412,8,18 258,430,7,12 320,465,10,22 323,515,5,20 38,508,8,18 55,555,8,7 115,583,9,14 260,542,8,28 315,597,12,13 260,612,6,18 258,690,11,35 262,730,14,22 310,720,6,18 173,692,8,13 5,722,10,22 472,735,7,20 475,150,5,26 490,475,5,15 470,440,5,12 490,300,4,8 253,805,10,25 248,850,6,22 30,830,9,22 75,900,14,22 262,905,15,25 258,950,8,25 20,925,18,15 100,980,11,20 40,1020,7,20 478,910,5,25 495,805,6,16 505,842,5,18 265,1085,12,18 495,1068,6,18 15,1095,18,28 55,1095,8,16 107,1160,8,12 77,1148,7,12 250,1155,5,20 490,1165,5,18 470,1170,5,14 608,505,5,20 943,525,4,12 943,585,4,12 952,962,5,20 565,675,4,9 208,968,6,12 320,988,8,6 146,1018,4,12 480,1028,6,12 350,195,5,9 197,825,5,12 278,825,5,12 323,800,4,12 292,405,5,10 490,35,4,12', 1035));
  var cold = list('165,35,50,9 190,218,95,7 180,242,60,12 205,392,50,12 185,470,50,14 190,755,45,9 175,985,45,18 365,1045,40,20 430,410,50,35 525,390,34,12 300,875,90,9 410,850,40,8 505,232,34,9 620,800,34,16', -165);
  var stops = [[0, 0, 0], [48, 0, 42], [30, 0, 120], [0, 50, 160], [0, 188, 90], [20, 195, 20], [108, 238, 0], [255, 120, 0], [255, 30, 20], [255, 30, 20]];

  var img = ctx.createImageData(w, h), boost = new Float32Array(w * h);
  function stamp(items, gain, skew, power) {
    items.forEach(function (b) {
      for (var y = Math.max(0, Math.floor(b[1] - b[3] * 2 - 3)); y < Math.min(h, b[1] + b[3] * 2 + 3); y++) {
        for (var x = Math.max(0, Math.floor(b[0] - b[2] * 2 - 3)); x < Math.min(w, b[0] + b[2] * 2 + 3); x++) {
          var dy = Math.abs(y - b[1]) / b[3], dx = Math.abs(x - b[0] + skew * (y - b[1])) / b[2];
          var v = gain * Math.exp(-0.7 * (Math.pow(dx, power) + Math.pow(dy, power))), k = y * w + x;
          if (Math.abs(v) > Math.abs(boost[k])) boost[k] = v;
        }
      }
    });
  }
  stamp(cold, -2.4, 0, 2);
  stamp(hot, 4, 0.25, 2.2);
  var u = 0;
  for (var x = 0; x < w; x++) {
    u += 1 / (3.2 + 54 * Math.exp(-x / 105));
    var base = lerpAt(profile, x), cut = x > 690;
    var mix = Math.max(0, Math.min(1, (x - 320) / 110)), norm = 1 / Math.sqrt(mix * mix + (1 - mix) * (1 - mix));
    var amp = x < 120 ? 1.4 : cut ? 1.35 : x < 330 ? 1.05 : 1.15;
    for (var y = 0; y < h; y++) {
      var sk = Math.max(0, Math.min(1, (x - 200) / 100)) * y / 75;
      var n = 0;
      if (mix < 1) n += (1 - mix) * (noise(u + 40, y / 9 + 9) * 0.85 + noise(u * 1.9 + 170, y / 6 + 77) * 0.45);
      if (mix > 0) n += mix * (noise(u + sk + 90, y / 19 + 130) * 0.75 + noise(u * 1.7 + sk * 1.7 + 210, y / 11 + 277) * 0.55);
      n *= norm;
      var k = y * w + x, v = base + n * amp, b = boost[k];
      if (v > 7.95) v = 7.95;
      var o = k * 4;
      if (b > 2 - noise(x / 3.2, y / 3.2 + 300) * 0.9) { img.data[o] = img.data[o + 1] = img.data[o + 2] = 255; img.data[o + 3] = 255; continue; }
      if (b > 0) v += (8 - v) * Math.min(1, b / 1.8);
      else v += b;
      if (x < 300 && v < 2.2) v = 2.2;
      v = Math.max(0, v);
      var s = Math.floor(v), f = v - s, p = stops[s], r = stops[s + 1];
      img.data[o] = p[0] + (r[0] - p[0]) * f;
      img.data[o + 1] = p[1] + (r[1] - p[1]) * f;
      img.data[o + 2] = p[2] + (r[2] - p[2]) * f;
      img.data[o + 3] = 255;
    }
  }
  ctx.putImageData(img, 0, 0);
  grid(ctx, w, h, false);
})();
```
